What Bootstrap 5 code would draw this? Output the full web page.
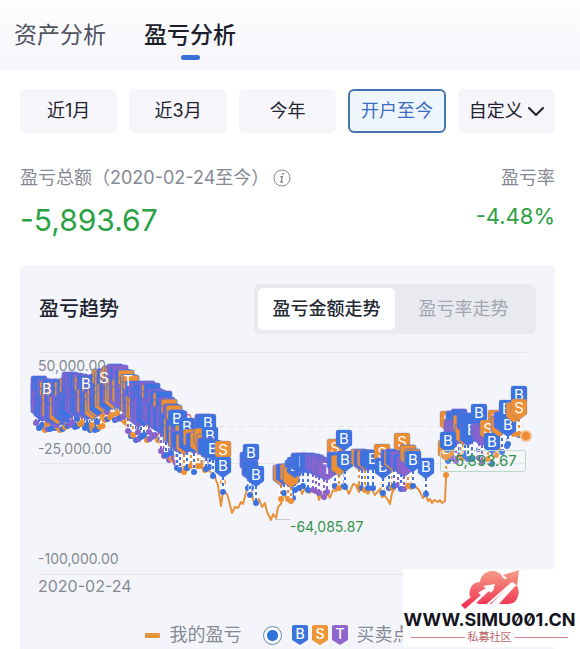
<!DOCTYPE html>
<html lang="zh-CN">
<head>
<meta charset="utf-8">
<meta name="viewport" content="width=device-width, initial-scale=1">
<title>盈亏分析</title>
<link href="https://cdn.jsdelivr.net/npm/bootstrap@5.3.0/dist/css/bootstrap.min.css" rel="stylesheet">
<style>
body{font-family:Inter,"Noto Sans CJK SC",sans-serif;color:#20232f;background:#fff;overflow-x:hidden}
.top-tabs{height:70px;padding:18px 14px 0;gap:38px;background:linear-gradient(#fdfdfe,#f5f5fb)}
.top-tabs .nav-link{padding:0;font-size:23px;line-height:34px;color:#50545f;position:relative}
.top-tabs .nav-link.active{color:#1c1f2b;font-weight:500}
.top-tabs .nav-link.active::after{content:"";position:absolute;left:50%;bottom:-8px;width:19px;height:5px;margin-left:-9px;border-radius:3px;background:#3b6fd8}
.page-body{padding:19px 25px 0 20px}
.ranges{gap:12px}
.ranges .btn{flex:1 1 0;height:44px;padding:0;font-size:18px;line-height:24px;border-radius:6px;background:#f5f5fa;color:#20232f;border:2px solid #f5f5fa;white-space:nowrap}
.ranges .btn.active{background:#eff5fd;border-color:#4576ae;color:#3a6cc0}
.muted-label{font-size:18px;line-height:26px;color:#858994}
.totals{padding-top:32px}
.gain{color:#2ba245}
.sum-total{font-size:30px;line-height:40px;margin-top:9px}
.sum-rate{font-size:22px;line-height:32px;margin-top:9px}
.info-btn{width:18px;height:18px;margin-left:4px}
.trend{margin-top:25px;background:#f4f5fa;border-radius:5px;padding-bottom:2px}
.trend-head{padding:19px 19px 0}
.trend-title{font-size:20px;line-height:30px;font-weight:500}
.segment{background:#e9eaef;border-radius:6px;padding:4px}
.segment .btn{height:42px;padding:0;font-size:18px;line-height:24px;border:0;border-radius:5px;width:137px;color:#a2a5b2}
.segment .btn.active{background:#fff;color:#252935;font-weight:500}
.chart{display:block;width:100%;height:auto;margin-top:11px}
.chart text{font-family:Inter,sans-serif;font-size:14px;fill:#858994}
.chart .date-label{font-size:16px}
.chart .green-label{fill:#33924a}
.chart .red-label{fill:#d9666b}
.chart .big-label{font-size:15px}
.chart .flag-letter{font-size:15px;fill:#fff;text-anchor:middle}
.legend-row{height:32px;padding-right:20px;margin-top:19px;color:#858994;font-size:18px;line-height:26px}
.dash-key{width:15px;height:5px;background:#e6953e;margin-right:10px;border-radius:1px}
.legend-row .form-check-input{width:19px;height:19px;margin:0 10px 0 21px;border:1px solid #6488a7;background:radial-gradient(circle,#2e74d8 0 5px,#f8fbff 6px);box-shadow:none}
.key-flags{width:56px;height:22px;margin-right:9px}
.key-flags text{font-size:14px;font-weight:500;fill:#fff;text-anchor:middle}
.stamp{position:absolute;right:4px;bottom:6px;width:173px;height:78px;background:#fff;color:#131320}
.stamp svg{width:60px;height:41px}
.stamp-url{font-size:18px;line-height:20px;font-weight:700;font-feature-settings:"zero"}
.stamp-sub{font-size:11px;line-height:15px;color:#bd6065;gap:3px}
.stamp-sub i{flex:1;height:1px;background:#ce8588}
</style>
<script src="https://cdn.jsdelivr.net/npm/bootstrap@5.3.0/dist/js/bootstrap.bundle.min.js"></script>
</head>
<body>
<div class="position-relative overflow-hidden">
<nav class="nav top-tabs align-items-start" aria-label="分析">
  <a class="nav-link" href="#assets">资产分析</a>
  <a class="nav-link active" aria-current="page" href="#profit">盈亏分析</a>
</nav>
<main class="page-body">
  <div class="d-flex ranges">
    <button class="btn" type="button">近1月</button>
    <button class="btn" type="button">近3月</button>
    <button class="btn" type="button">今年</button>
    <button class="btn active" type="button">开户至今</button>
    <button class="btn" type="button">自定义 <svg width="16" height="10" viewBox="0 0 16 10" fill="none" stroke="#20232f" stroke-width="2" stroke-linecap="round" stroke-linejoin="round" aria-hidden="true"><path d="M1 1l7 7 7-7"/></svg></button>
  </div>
  <section class="d-flex justify-content-between totals">
    <div>
      <div class="d-flex align-items-center muted-label"><span>盈亏总额（2020-02-24至今）</span>
        <button class="btn p-0 border-0 info-btn d-flex" type="button" aria-label="说明"><svg width="18" height="18" viewBox="0 0 18 18" fill="none" stroke="#858994" aria-hidden="true"><circle cx="9" cy="9" r="8"/><path d="M7.2 7.6h2.1L8 13.2q1 .3 2-.7" stroke-width="1.4"/><circle cx="10" cy="4.8" r=".8" fill="#858994" stroke-width=".6"/></svg></button></div>
      <div class="sum-total gain">-5,893.67</div>
    </div>
    <div class="text-end">
      <div class="muted-label">盈亏率</div>
      <div class="sum-rate gain">-4.48%</div>
    </div>
  </section>
  <section class="trend">
    <div class="trend-head d-flex justify-content-between align-items-center">
      <h2 class="trend-title m-0">盈亏趋势</h2>
      <div class="segment d-flex">
        <button class="btn active" type="button">盈亏金额走势</button>
        <button class="btn" type="button">盈亏率走势</button>
      </div>
    </div>
    <svg class="chart" id="chart" viewBox="20 345 535 255" role="img" aria-label="盈亏金额走势">
      <g stroke="#e3e5ea">
        <path d="M38 352.500H526M38 463.500H526M38 574.500H555"/>
        <path d="M38 426.500H526" stroke-dasharray="6 4"/>
      </g>
      <text x="38" y="371">50,000.00</text>
      <text x="38" y="454">-25,000.00</text>
      <text x="38" y="564">-100,000.00</text>
      <text class="date-label" x="38" y="592">2020-02-24</text>
      <text class="red-label" x="184" y="425">3</text>
      <path fill="none" stroke="#e6923b" stroke-width="2" stroke-linejoin="round" d="M38 428L50 424 60 428 72 421 84 427 97 419 108 413 118 418 127 426 133 438 146 428 157 438 166 455 180 469 195 466 208 470 214 475 218 485 219 493 221 506 223 491 227 494 229 501 232 513 235 507 238 508 241 502 243 504 247 489 250 482 253 500 256 503 259 499 262 507 265 503 267 512 271 520 273 514 276 518 278 507 281 504 283 494 286 497 288 489 291 494 293 486 297 491 300 487 302 494 305 488 309 493 313 489 317 491 319 500 322 492 325 498 328 494 330 498 333 490 336 491 339 484 342 487 345 485 349 494 353 484 356 485 359 492 361 488 365 489 368 494 371 488 375 495 379 490 382 497 385 496 388 500 390 504 392 493 396 487 400 484 403 489 407 482 411 489 415 486 419 490 423 498 426 495 428 501 430 499 432 503 434 500 438 502 440 500 442 503 445 501 447 455"/>
      <path d="M275 519.500H290" stroke="#c3c7ca"/>
      <g id="dots"></g>
      <g id="flags"></g>
      <circle cx="526" cy="436" r="6" fill="#f6c08b"/><circle cx="526" cy="436" r="4" fill="#ed8b37"/>
      <text class="green-label" x="290" y="532">-64,085.87</text>
      <rect x="440.500" y="450.500" width="85" height="21" rx="2" fill="#f4f5fa" fill-opacity=".12" stroke="#bdd8c6"/>
      <text class="green-label big-label" x="448" y="466">-5,893.67</text>
    </svg>
    <div class="legend-row d-flex justify-content-center align-items-center">
      <span class="dash-key"></span><span>我的盈亏</span>
      <input class="form-check-input" type="radio" id="trades" checked>
      <label class="d-flex align-items-center" for="trades">
        <svg class="key-flags" viewBox="0 0 56 22" aria-hidden="true">
          <path fill="#3a73da" d="M2 1h12q2 0 2 2v13l-8 5-8-5V3q0-2 2-2z"/>
          <path fill="#ed9638" d="M22 1h12q2 0 2 2v13l-8 5-8-5V3q0-2 2-2z"/>
          <path fill="#8f66cc" d="M42 1h12q2 0 2 2v13l-8 5-8-5V3q0-2 2-2z"/>
          <text x="8" y="15">B</text><text x="28" y="15">S</text><text x="48" y="15">T</text>
        </svg>买卖点</label>
    </div>
  </section>
</main>
<aside class="stamp d-flex flex-column align-items-center">
  <svg viewBox="0 0 60 41" aria-hidden="true">
    <defs><linearGradient id="cloud" gradientUnits="userSpaceOnUse" x1="0" y1="0" x2="0" y2="38"><stop offset="0" stop-color="#f5a28c"/><stop offset="1" stop-color="#f0304f"/></linearGradient></defs>
    <path fill="url(#cloud)" d="M20 35C12 34 8 28 10 21c1-5 5-8 10-8C21 6 26 2 32 2c5 0 8 2 10 5 5-2 10 1 11 6 5 3 7 9 5 14-1 5-5 8-10 8z"/>
    <path fill="#fff" d="M4 30L13 27 26 19 23 17 35 15 32 26 29 22 15 35 8 38z"/>
    <path fill="url(#cloud)" d="M1 36L17 23 21 26 5 40z"/>
    <path fill="#fff" d="M26 36L51 11 58 14 38 36z"/>
    <path fill="#fff" d="M42 8L46 1 60 0V17L54 17z"/>
    <path fill="url(#cloud)" d="M18 35L47 9 43 6 59 1 57 17 53 13 31 35z"/>
    <path fill="none" stroke="#fff" stroke-width="2" d="M27 36L52 14"/>
  </svg>
  <div class="stamp-url">WWW.SIMU001.CN</div>
  <div class="stamp-sub d-flex align-items-center w-100 px-2"><i></i><span>私募社区</span><i></i></div>
</aside>
</div>
<script>
const NS = 'http://www.w3.org/2000/svg';
const colours = { B: '#3c73e0', S: '#ed8f35', T: '#8b63cc' };
const flags = document.getElementById('flags');
const dots = document.getElementById('dots');
function add(parent, name, attrs, text) {
  const node = document.createElementNS(NS, name);
  for (const key in attrs) node.setAttribute(key, attrs[key]);
  if (text) node.textContent = text;
  parent.appendChild(node);
}
function flag(x, y, kind, letter) {
  add(flags, 'path', { d: `M${x - 6} ${y}h12q2 0 2 2v13l-8 6-8-6v-13q0-2 2-2z`, fill: colours[kind], stroke: letter ? '#5b78c8' : colours[kind === 'B' ? 'T' : 'B'], 'stroke-width': letter ? .3 : .7 });
  if (letter) add(flags, 'text', { x, y: y + 14, class: 'flag-letter' }, kind);
}
function stem(x, from, to, kind) {
  add(dots, 'path', { d: `M${x} ${from}V${to}`, stroke: '#fff', 'stroke-width': 3 });
  add(dots, 'path', { d: `M${x} ${from}V${to}`, stroke: colours[kind], 'stroke-width': 2, 'stroke-dasharray': '3 3' });
  add(dots, 'circle', { cx: x, cy: to, r: 3, fill: colours[kind] });
}
// x, flag top, dot height, trade kinds in order
const early = [
  [39,376,428,'BTB'],[45,379,430,'TBS'],[50,379,429,'BSB'],[55,382,428,'STB'],[60,379,430,'BTS'],[65,380,427,'BBS'],
  [70,372,425,'TBT'],[75,373,427,'BTB'],[80,374,424,'TBS'],[85,375,428,'BSB'],[90,377,430,'SBB'],[95,375,430,'BSB'],
  [100,369,427,'SBS'],[105,369,420,'BSS'],[110,366,417,'STS'],[115,364,420,'TSB'],[120,365,418,'TSB'],[126,370,422,'STS'],
  [131,375,436,'STB'],[136,383,440,'TSB'],[141,384,437,'BTB'],[147,381,440,'TBS'],[152,383,437,'BTT'],[158,390,440,'BTS'],
  [164,391,456,'BTT'],[169,399,460,'SBT'],[174,405,458,'SBT'],[179,411,468,'BTB']
];
early.forEach(([x, y, dot, kinds], i) => {
  stem(x, y + 37, dot, kinds[2]);
  stem(x - 3, y + 37, dot - 5, kinds[1]);
  const next = early[i + 1];
  for (let row = 0; row < 4; row++) flag(x, y + row * 7, kinds[(row >> 1) % 3]);
  if (next) {
    const mx = (x + next[0]) / 2, my = (y + next[1]) / 2;
    stem(mx, my + 37, dot - 1, kinds[0]);
    for (let row = 0; row < 4; row++) flag(mx, my + 2 + row * 7, kinds[(2 + (row >> 1)) % 3]);
  }
});
[[47,381,'B'],[86,376,'B'],[104,370,'S'],[128,373,'T']].forEach(([x, y, kind]) =>
  add(flags, 'text', { x, y: y + 13, class: 'flag-letter' }, kind));
// x, flag top, dot height, kind, letter visible
const later = [
  [177,410,468,'B',1],[183,425,466,'S',0],[187,418,468,'B',1],[180,431,470,'B',0],[184,434,472,'S',0],[187,432,468,'B',0],[191,429,466,'S',0],[194,433,472,'B',0],[198,432,466,'S',0],
  [203,414,462,'B',0],[208,414,463,'B',1],[202,428,466,'S',0],[205,434,470,'S',0],[210,427,467,'B',1],[206,438,469,'B',0],[213,440,476,'B',1],
  [223,441,482,'S',1],[223,457,492,'B',1],
  [248,452,488,'B',0],[251,444,488,'B',1],[250,460,495,'B',0],[256,466,503,'B',1],
  [281,465,499,'S',0],[284,464,493,'B',0],[288,464,499,'S',0],[293,460,498,'B',0],[291,467,501,'S',0],[295,457,490,'B',1],[299,453,488,'B',0],[303,453,486,'B',1],
  [308,453,490,'B',0],[313,454,490,'T',0],[316,455,491,'T',0],[319,457,493,'T',0],[324,459,497,'T',0],[327,460,492,'T',1],
  [335,439,486,'S',1],[335,452,486,'B',0],[339,455,488,'S',0],[344,430,486,'B',1],[345,451,487,'B',1],
  [359,449,487,'S',0],[362,450,488,'B',0],[365,450,490,'S',0],[368,450,488,'B',0],[373,450,488,'B',1],[382,444,490,'S',1],[383,458,493,'B',1],
  [389,450,488,'B',0],[392,450,488,'S',0],[394,449,486,'B',0],[402,433,480,'S',1],[398,451,485,'T',0],[401,454,489,'B',0],[404,456,489,'T',0],[408,445,486,'S',0],[412,449,485,'S',0],[413,451,486,'B',1],[426,458,494,'B',1],
  [446,440,475,'S',1],[448,411,455,'S',1],[454,411,458,'B',0],[459,409,455,'B',0],[452,420,458,'T',0],[456,424,461,'T',0],[461,415,456,'S',0],[463,424,458,'S',0],[448,432,461,'B',1],
  [465,413,456,'B',0],[468,425,459,'B',0],[472,421,459,'B',1],[479,404,450,'B',1],[479,423,458,'T',0],[482,425,462,'T',0],[496,410,455,'S',1],[488,420,459,'S',1],[492,433,464,'B',1],
  [499,416,449,'S',0],[502,412,452,'B',0],[507,400,446,'B',1],[508,416,444,'B',1],[519,386,435,'B',1],[514,402,434,'S',0],[519,399,434,'S',1]
];
for (const [x, y, dot, kind, letter] of later) { stem(x, y + 20, dot, kind); flag(x, y, kind, letter); }
</script>
</body>
</html>
